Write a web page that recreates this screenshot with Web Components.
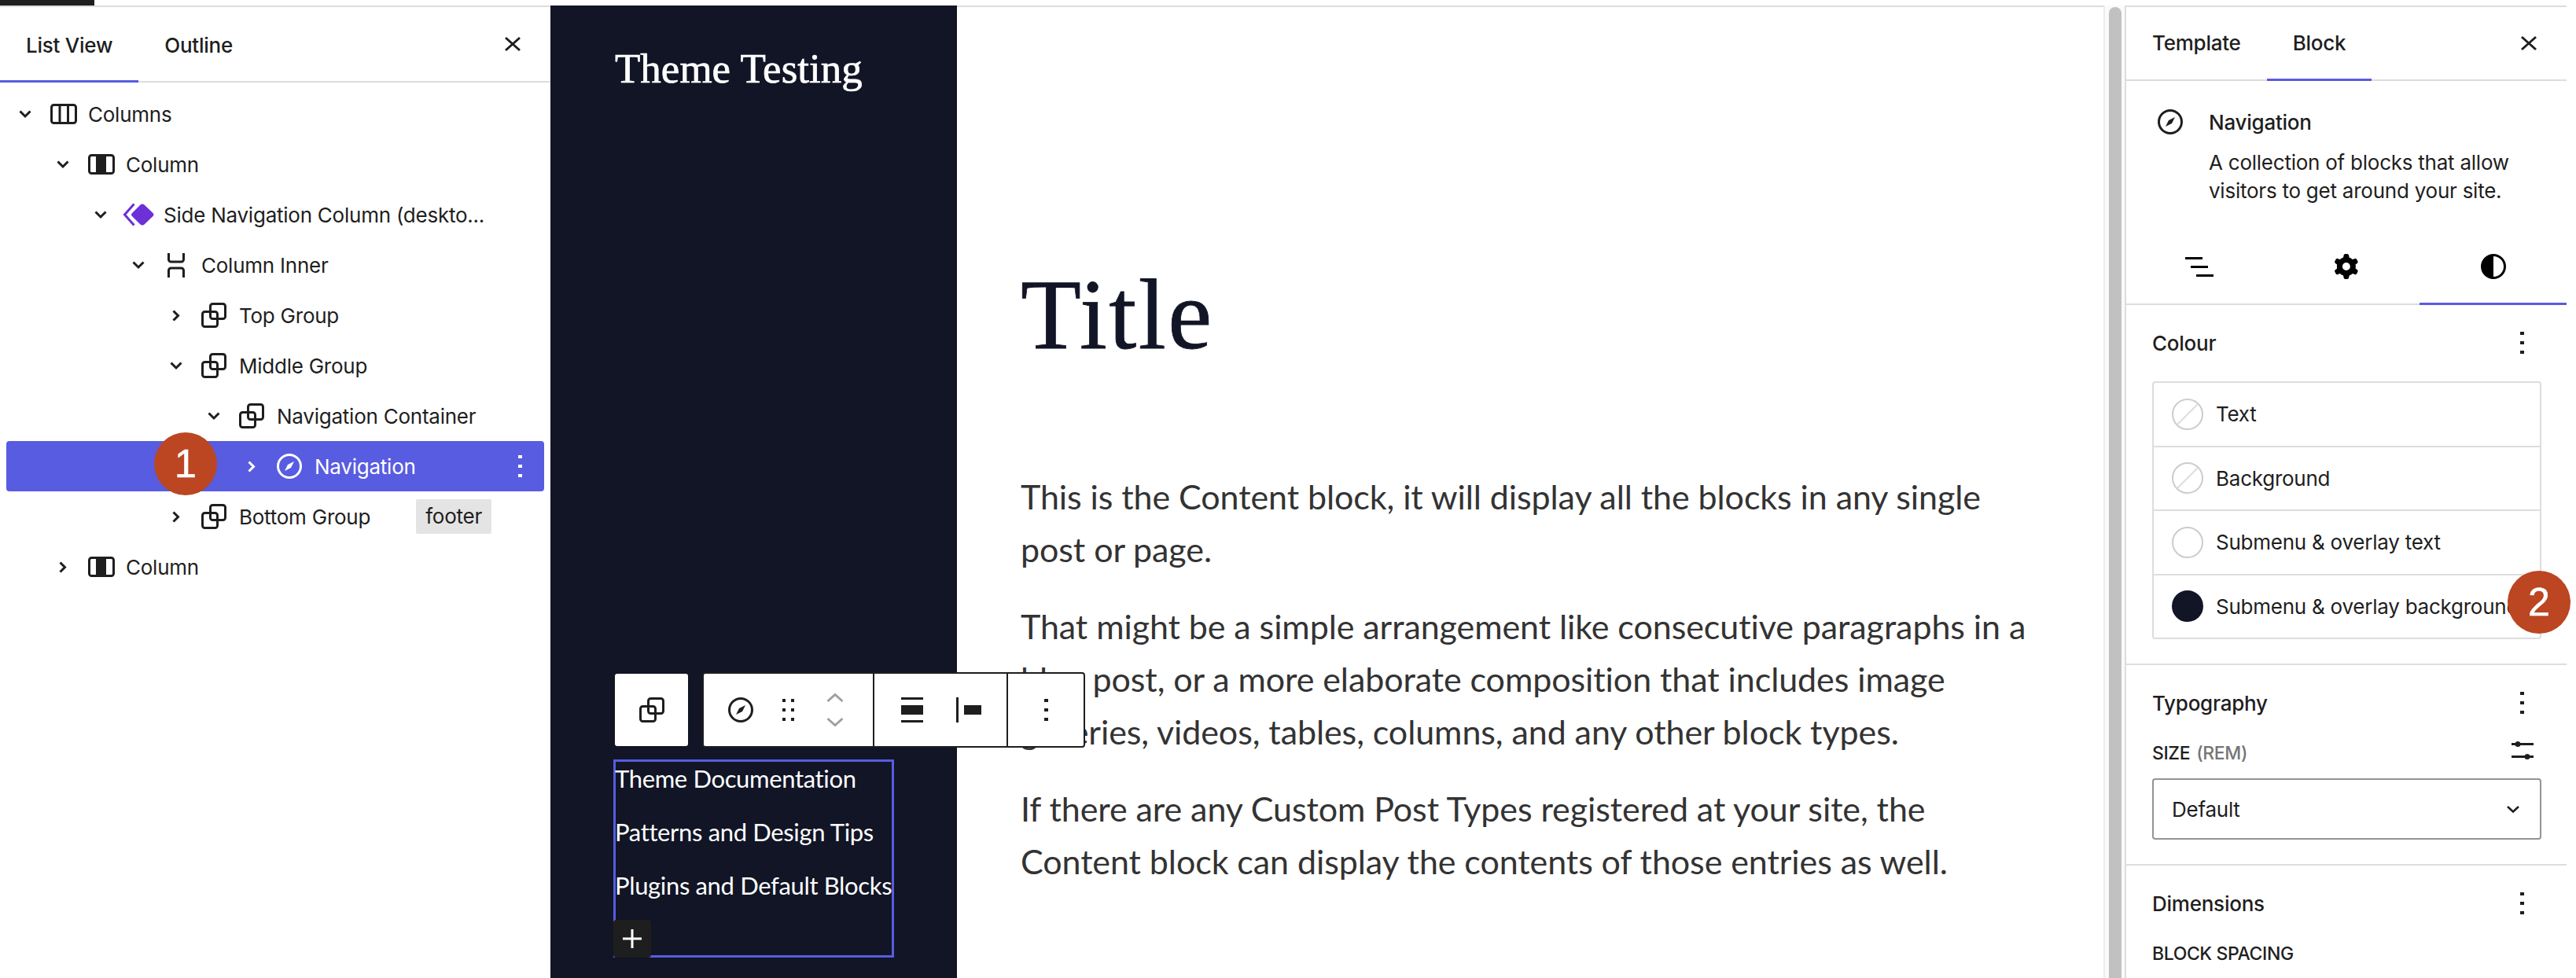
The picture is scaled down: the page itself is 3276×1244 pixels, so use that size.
<!DOCTYPE html>
<html lang="en">
<head>
<meta charset="utf-8">
<title>Site editor</title>
<style>
  html, body { margin: 0; padding: 0; height: 1244px; overflow: hidden; background: #fff; }
</style>
</head>
<body>
<editor-shell>
  <list-panel slot="left">
    <tree-row level="0" icon="columns" open>Columns</tree-row>
    <tree-row level="1" icon="column" open>Column</tree-row>
    <tree-row level="2" icon="sidenav" open>Side Navigation Column (deskto...</tree-row>
    <tree-row level="3" icon="inner" open>Column Inner</tree-row>
    <tree-row level="4" icon="group">Top Group</tree-row>
    <tree-row level="4" icon="group" open>Middle Group</tree-row>
    <tree-row level="5" icon="group" open>Navigation Container</tree-row>
    <tree-row level="6" icon="compass" selected>Navigation</tree-row>
    <tree-row level="4" icon="group" tag="footer">Bottom Group</tree-row>
    <tree-row level="1" icon="column">Column</tree-row>
  </list-panel>

  <site-column slot="dark">
    <site-title>Theme Testing</site-title>
    <nav-block>
      <nav-item>Theme Documentation</nav-item>
      <nav-item>Patterns and Design Tips</nav-item>
      <nav-item>Plugins and Default Blocks</nav-item>
    </nav-block>
  </site-column>

  <post-content slot="content">
    <post-title>Title</post-title>
    <post-para>This is the Content block, it will display all the blocks in any single<br>post or page.</post-para>
    <post-para>That might be a simple arrangement like consecutive paragraphs in a<br>blog post, or a more elaborate composition that includes image<br>galleries, videos, tables, columns, and any other block types.</post-para>
    <post-para>If there are any Custom Post Types registered at your site, the<br>Content block can display the contents of those entries as well.</post-para>
  </post-content>

  <settings-panel slot="right">
    <panel-section heading="Colour">
      <color-list>
        <color-row swatch="none">Text</color-row>
        <color-row swatch="none">Background</color-row>
        <color-row swatch="white">Submenu &amp; overlay text</color-row>
        <color-row swatch="dark">Submenu &amp; overlay background</color-row>
      </color-list>
    </panel-section>
    <panel-section heading="Typography">
      <size-control></size-control>
    </panel-section>
    <panel-section heading="Dimensions" open-end>
      <small-label>BLOCK SPACING</small-label>
    </panel-section>
  </settings-panel>

  <step-badge slot="overlay" x="196" y="550">1</step-badge>
  <step-badge slot="overlay" x="3189" y="726">2</step-badge>
</editor-shell>

<script>
const INK = "#1e1e1e";
const ACCENT = "#585ce0";
const NIGHT = "#111526";
const UI_FONT = 'Inter, "Liberation Sans", sans-serif';

// name: [width, height, svg body, left margin]
const ICONS = {
  close: [20, 18, `<path d="M1 1l18 16M19 1L1 17" stroke="currentColor" stroke-width="3"/>`],
  "chev-down": [16, 10, `<path d="M1.5 1.5L8 8l6.5-6.5" stroke="currentColor" stroke-width="3"/>`],
  "chev-right": [16, 15, `<path d="M4.5 1.5l6 6-6 6" stroke="currentColor" stroke-width="3"/>`],
  columns: [34, 26, `<rect x="1.5" y="1.5" width="31" height="23" rx="3" stroke="currentColor" stroke-width="3"/><path d="M12 2v22M22.5 2v22" stroke="currentColor" stroke-width="3"/>`],
  column: [34, 26, `<rect x="1.5" y="1.5" width="31" height="23" rx="3" stroke="currentColor" stroke-width="3"/><rect x="10" y="2" width="13" height="22" fill="currentColor"/>`],
  sidenav: [40, 30, `<path d="M25 1.5q1.5 0 2.5 1L38.5 13q2 2 0 4L27.5 27.5q-2.5 2-5 0L12 17q-2-2 0-4L22.5 2.5q1-1 2.5-1z" fill="#6d2fd6"/><path d="M14.5 1.5L2.5 15l12 13.5" stroke="#6d2fd6" stroke-width="3"/>`, -4],
  inner: [22, 31, `<path d="M1.5 0v8a3 3 0 0 0 3 3h13a3 3 0 0 0 3-3V0M1.5 31v-9a3 3 0 0 1 3-3h13a3 3 0 0 1 3 3v9" stroke="currentColor" stroke-width="3"/>`, 5],
  group: [32, 32, `<rect x="1.5" y="11.5" width="19" height="19" rx="3" stroke="currentColor" stroke-width="3"/><rect x="11.5" y="1.5" width="19" height="19" rx="3" stroke="currentColor" stroke-width="3"/>`],
  compass: [32, 32, `<circle cx="16" cy="16" r="14.5" stroke="currentColor" stroke-width="3"/><path d="M22 10l-4 8-8 4 4-8z" fill="currentColor"/>`],
  dots: [5, 28, `<rect width="5" height="4" fill="currentColor"/><rect y="12" width="5" height="4" fill="currentColor"/><rect y="24" width="5" height="4" fill="currentColor"/>`],
  dragger: [15, 28, `<path d="M0 0h4v4H0zM11 0h4v4h-4zM0 12h4v4H0zM11 12h4v4h-4zM0 24h4v4H0zM11 24h4v4h-4z" fill="currentColor"/>`],
  mover: [22, 42, `<path d="M1.5 10L11 1.5 20.5 10M1.5 32L11 40.5 20.5 32" stroke="#a0a0a0" stroke-width="3"/>`],
  "align-full": [28, 32, `<path d="M0 0h28v3H0zM0 10h28v12H0zM0 29h28v3H0z" fill="currentColor"/>`],
  "justify-left": [32, 32, `<path d="M0 0h3v32H0zM10 10h22v12H10z" fill="currentColor"/>`],
  "list-view": [36, 25, `<path d="M0 0h22v3H0zM7 11h22v3H7zM14 22h22v3H14z" fill="#000"/>`],
  cog: [30, 32, `<path fill="#000" fill-rule="evenodd" d="M10.289 4.836A1 1 0 0 1 11.275 4h1.306a1 1 0 0 1 .987.836l.244 1.466c.787.26 1.503.679 2.108 1.218l1.393-.522a1 1 0 0 1 1.216.437l.653 1.13a1 1 0 0 1-.23 1.273l-1.148.944a6.025 6.025 0 0 1 0 2.435l1.149.946a1 1 0 0 1 .23 1.272l-.653 1.13a1 1 0 0 1-1.216.437l-1.394-.522c-.605.54-1.32.958-2.108 1.218l-.244 1.466a1 1 0 0 1-.987.836h-1.306a1 1 0 0 1-.986-.836l-.244-1.466a5.995 5.995 0 0 1-2.108-1.218l-1.394.522a1 1 0 0 1-1.217-.436l-.653-1.131a1 1 0 0 1 .23-1.272l1.149-.946a6.026 6.026 0 0 1 0-2.435l-1.148-.944a1 1 0 0 1-.23-1.272l.653-1.131a1 1 0 0 1 1.217-.437l1.393.522a5.994 5.994 0 0 1 2.108-1.218l.244-1.466ZM14.429 12a2.5 2.5 0 1 1-5 0 2.5 2.5 0 0 1 5 0Z" transform="scale(2) translate(-4.5 -4)"/>`],
  half: [32, 32, `<circle cx="16" cy="16" r="14.5" stroke="#000" stroke-width="3"/><path d="M16 1a15 15 0 0 0 0 30z" fill="#000"/>`],
  sliders: [28, 23, `<path d="M0 3.5h28M0 19.5h28" stroke="currentColor" stroke-width="3"/><circle cx="8" cy="3.5" r="3.5" fill="currentColor"/><circle cx="20" cy="19.5" r="3.5" fill="currentColor"/>`],
  "select-chev": [16, 9, `<path d="M1 1l7 6.5L15 1" stroke="currentColor" stroke-width="2.5"/>`],
  plus: [24, 24, `<path d="M12 0v24M0 12h24" stroke="currentColor" stroke-width="3"/>`],
};

class WpIcon extends HTMLElement {
  connectedCallback() {
    const [w, h, body, ml] = ICONS[this.getAttribute("name")];
    const root = this.shadowRoot || this.attachShadow({ mode: "open" });
    root.innerHTML = `<style>
      :host { display: inline-flex; flex: none; margin-left: ${ml || 0}px; line-height: 0; }
      svg { display: block; overflow: visible; }
    </style><svg width="${w}" height="${h}" viewBox="0 0 ${w} ${h}" fill="none">${body}</svg>`;
  }
}
customElements.define("wp-icon", WpIcon);

class EditorShell extends HTMLElement {
  constructor() {
    super();
    this.attachShadow({ mode: "open" });
    this.shadowRoot.innerHTML = /* html */`
      <style>
        :host { display: block; position: relative; width: 3276px; height: 1244px; overflow: hidden;
          font-family: ${UI_FONT}; color: ${INK}; letter-spacing: -.24px; }
        .top { height: 7px; }
        .top i { display: block; width: 120px; height: 7px; background: ${INK}; }
        .main { display: flex; height: 1237px; }
        .canvas { flex: 1; display: flex; min-width: 0; }
        .margin { width: 12px; flex: none; }
      </style>
      <div class="top"><i></i></div>
      <div class="main">
        <slot name="left"></slot>
        <div class="canvas">
          <slot name="dark"></slot>
          <slot name="content"></slot>
        </div>
        <editor-scrollbar></editor-scrollbar>
        <slot name="right"></slot>
        <div class="margin"></div>
      </div>
      <slot name="overlay"></slot>
    `;
  }
}
customElements.define("editor-shell", EditorShell);

class EditorScrollbar extends HTMLElement {
  constructor() {
    super();
    this.attachShadow({ mode: "open" });
    this.shadowRoot.innerHTML = `
      <style>
        :host { display: block; flex: none; width: 29px; box-sizing: border-box; padding: 2px 4px 0 5px;
          background: #fafafa; border-left: 2px solid #ececec; border-right: 2px solid #ddd; }
        div { height: 100%; width: 16px; background: #c1c1c1; border-radius: 8px 8px 0 0; }
      </style><div></div>`;
  }
}
customElements.define("editor-scrollbar", EditorScrollbar);

class TabBar extends HTMLElement {
  constructor() {
    super();
    this.attachShadow({ mode: "open" });
    this.shadowRoot.innerHTML = `
      <style>
        :host { display: flex; align-items: stretch; box-sizing: border-box; height: var(--bar-h, 96px);
          border-top: 2px solid #ddd; border-bottom: 2px solid #ddd; }
        .x { margin-left: auto; padding-right: 38px; align-self: center; display: flex; }
      </style>
      <slot></slot>
      <div class="x"><wp-icon name="close"></wp-icon></div>`;
  }
}
customElements.define("tab-bar", TabBar);

class TabItem extends HTMLElement {
  constructor() {
    super();
    this.attachShadow({ mode: "open" });
    this.shadowRoot.innerHTML = `
      <style>
        :host { display: flex; align-items: center; padding: var(--tab-top, 0px) 33px 0; margin-bottom: -2px;
          box-sizing: border-box; font-size: 26px; font-weight: 500; border-bottom: 3px solid transparent; }
        :host([active]) { border-bottom-color: ${ACCENT}; }
      </style><slot></slot>`;
  }
}
customElements.define("tab-item", TabItem);

class ListPanel extends HTMLElement {
  constructor() {
    super();
    this.attachShadow({ mode: "open" });
    this.shadowRoot.innerHTML = `
      <style>
        :host { display: block; flex: none; width: 700px; height: 100%; background: #fff; --bar-h: 98px; --tab-top: 3px; }
        .tree { padding-top: 8px; }
      </style>
      <tab-bar><tab-item active>List View</tab-item><tab-item>Outline</tab-item></tab-bar>
      <div class="tree"><slot></slot></div>`;
  }
}
customElements.define("list-panel", ListPanel);

class TreeRow extends HTMLElement {
  constructor() {
    super();
    this.attachShadow({ mode: "open" });
  }
  connectedCallback() {
    const level = +this.getAttribute("level");
    const selected = this.hasAttribute("selected");
    const tag = this.getAttribute("tag");
    this.shadowRoot.innerHTML = /* html */`
      <style>
        :host { display: block; font-size: 26px; }
        .row { display: flex; align-items: center; height: 64px; margin: 0 8px; box-sizing: border-box;
          padding-left: ${16 + 48 * level}px; border-radius: 4px; white-space: nowrap; }
        :host([selected]) .row { background: ${ACCENT}; color: #fff; padding-right: 30px; }
        .chev { display: flex; width: 16px; margin-right: 24px; flex: none; }
        .ico { display: flex; width: 34px; margin-right: 14px; flex: none; }
        .more { margin-left: auto; transform: translateX(2px); display: flex; }
        .tag { margin-left: 58px; height: 44px; line-height: 44px; padding: 0 12px; background: #e4e4e4; border-radius: 2px; }
      </style>
      <div class="row">
        <span class="chev"><wp-icon name="${this.hasAttribute("open") ? "chev-down" : "chev-right"}"></wp-icon></span>
        <span class="ico"><wp-icon name="${this.getAttribute("icon")}"></wp-icon></span>
        <slot></slot>
        ${tag ? `<span class="tag">${tag}</span>` : ""}
        ${selected ? `<span class="more"><wp-icon name="dots"></wp-icon></span>` : ""}
      </div>`;
  }
}
customElements.define("tree-row", TreeRow);

class SiteColumn extends HTMLElement {
  constructor() {
    super();
    this.attachShadow({ mode: "open" });
    this.shadowRoot.innerHTML = `
      <style>
        :host { display: flex; flex-direction: column; flex: none; box-sizing: border-box; width: 517px; height: 100%;
          background: ${NIGHT}; color: #fff; padding: 48px 0 26px 80px; position: relative; z-index: 2; }
      </style><slot></slot>`;
  }
}
customElements.define("site-column", SiteColumn);

class SiteTitle extends HTMLElement {
  constructor() {
    super();
    this.attachShadow({ mode: "open" });
    this.shadowRoot.innerHTML = `
      <style>
        :host { display: block; padding-left: 2px; font: 400 53px/65px "Liberation Serif", serif; letter-spacing: 0;
          -webkit-text-stroke: .7px #fff; white-space: nowrap; }
      </style><slot></slot>`;
  }
}
customElements.define("site-title", SiteTitle);

class NavBlock extends HTMLElement {
  constructor() {
    super();
    this.attachShadow({ mode: "open" });
    this.shadowRoot.innerHTML = `
      <style>
        :host { display: flex; flex-direction: column; gap: 36px; position: relative; margin-top: auto;
          box-sizing: border-box; width: 357px; height: 252px; padding-top: 5px; border: 3px solid ${ACCENT}; }
        .add { position: absolute; left: -3px; bottom: -3px; width: 48px; height: 48px; background: ${INK};
          border-radius: 4px; display: flex; align-items: center; justify-content: center; color: #fff; }
      </style>
      <block-toolbar></block-toolbar>
      <slot></slot>
      <div class="add"><wp-icon name="plus"></wp-icon></div>`;
  }
}
customElements.define("nav-block", NavBlock);

class NavItem extends HTMLElement {
  constructor() {
    super();
    this.attachShadow({ mode: "open" });
    this.shadowRoot.innerHTML = `
      <style>
        :host { display: block; font: 400 31px/32px Lato, sans-serif; color: #fff; white-space: nowrap; letter-spacing: -.35px; margin-left: -1px; }
      </style><slot></slot>`;
  }
}
customElements.define("nav-item", NavItem);

class BlockToolbar extends HTMLElement {
  constructor() {
    super();
    this.attachShadow({ mode: "open" });
    this.shadowRoot.innerHTML = /* html */`
      <style>
        :host { position: absolute; left: -1px; top: -114px; display: flex; align-items: center; gap: 18px; color: ${INK}; z-index: 3; }
        .parent { width: 93px; height: 92px; background: #fff; border-radius: 3px; display: flex; align-items: center; justify-content: center; }
        .bar { display: flex; height: 96px; box-sizing: border-box; background: #fff; border: 2px solid ${INK}; border-radius: 4px; }
        .seg { display: flex; align-items: center; box-sizing: border-box; }
        .seg + .seg { border-left: 2px solid ${INK}; }
        .s1 { width: 215px; padding-left: 31px; }
        .s1 wp-icon:nth-child(2) { margin-left: 37px; }
        .s1 wp-icon:nth-child(3) { margin-left: 41px; }
        .s2 { width: 170px; padding-left: 34px; }
        .s2 wp-icon:nth-child(2) { margin-left: 42px; }
        .s3 { width: 98px; justify-content: center; }
      </style>
      <div class="parent"><wp-icon name="group"></wp-icon></div>
      <div class="bar">
        <div class="seg s1"><wp-icon name="compass"></wp-icon><wp-icon name="dragger"></wp-icon><wp-icon name="mover"></wp-icon></div>
        <div class="seg s2"><wp-icon name="align-full"></wp-icon><wp-icon name="justify-left"></wp-icon></div>
        <div class="seg s3"><wp-icon name="dots"></wp-icon></div>
      </div>`;
  }
}
customElements.define("block-toolbar", BlockToolbar);

class PostContent extends HTMLElement {
  constructor() {
    super();
    this.attachShadow({ mode: "open" });
    this.shadowRoot.innerHTML = `
      <style>
        :host { display: block; flex: 1; box-sizing: border-box; height: 100%; min-width: 0; border-top: 2px solid #ddd;
          padding: 316px 0 0 81px; background: #fff; }
      </style><slot></slot>`;
  }
}
customElements.define("post-content", PostContent);

class PostTitle extends HTMLElement {
  constructor() {
    super();
    this.attachShadow({ mode: "open" });
    this.shadowRoot.innerHTML = `
      <style>
        :host { display: block; font: 400 126px/151px "Liberation Serif", serif; letter-spacing: 2.4px; color: ${NIGHT};
          -webkit-text-stroke: .8px ${NIGHT}; margin-bottom: 122px; }
      </style><slot></slot>`;
  }
}
customElements.define("post-title", PostTitle);

class PostPara extends HTMLElement {
  constructor() {
    super();
    this.attachShadow({ mode: "open" });
    this.shadowRoot.innerHTML = `
      <style>
        :host { display: block; font: 400 43px/67px Lato, sans-serif; color: #333; margin-bottom: 31px; white-space: nowrap; letter-spacing: -.08px; }
      </style><slot></slot>`;
  }
}
customElements.define("post-para", PostPara);

class SettingsPanel extends HTMLElement {
  constructor() {
    super();
    this.attachShadow({ mode: "open" });
    this.shadowRoot.innerHTML = /* html */`
      <style>
        :host { display: block; flex: none; width: 560px; height: 100%; overflow: hidden; background: #fff; --bar-h: 96px; }
        .card { display: grid; grid-template-columns: 32px 1fr; column-gap: 33px; padding: 35px 32px 31px 40px; }
        .card wp-icon { margin-top: 1px; }
        h2 { margin: 0; font: 500 26px/36px ${UI_FONT}; }
        p { margin: 15px 0 0; font: 400 26px/36px ${UI_FONT}; white-space: nowrap; }
        .modes { display: grid; grid-template-columns: repeat(3, 1fr); height: 96px; box-sizing: border-box; border-bottom: 2px solid #ddd; }
        .mode { display: flex; align-items: center; justify-content: center; margin-bottom: -2px; border-bottom: 3px solid transparent; padding-top: 1px; }
        .mode.on { border-bottom-color: ${ACCENT}; }
      </style>
      <tab-bar><tab-item>Template</tab-item><tab-item active>Block</tab-item></tab-bar>
      <div class="card">
        <wp-icon name="compass"></wp-icon>
        <div><h2>Navigation</h2><p>A collection of blocks that allow<br>visitors to get around your site.</p></div>
      </div>
      <div class="modes">
        <div class="mode"><wp-icon name="list-view"></wp-icon></div>
        <div class="mode"><wp-icon name="cog"></wp-icon></div>
        <div class="mode on"><wp-icon name="half"></wp-icon></div>
      </div>
      <slot></slot>`;
  }
}
customElements.define("settings-panel", SettingsPanel);

class PanelSection extends HTMLElement {
  constructor() {
    super();
    this.attachShadow({ mode: "open" });
  }
  connectedCallback() {
    this.shadowRoot.innerHTML = /* html */`
      <style>
        :host { display: block; padding: 31px 32px 31px 33px; border-bottom: 2px solid #ddd; }
        :host([open-end]) { border-bottom: 0; }
        .head { display: flex; align-items: center; justify-content: space-between; height: 34px; margin-bottom: 32px;
          font-size: 26px; font-weight: 500; padding-right: 22px; }
      </style>
      <div class="head"><span>${this.getAttribute("heading")}</span><wp-icon name="dots"></wp-icon></div>
      <slot></slot>`;
  }
}
customElements.define("panel-section", PanelSection);

class ColorList extends HTMLElement {
  constructor() {
    super();
    this.attachShadow({ mode: "open" });
    this.shadowRoot.innerHTML = `
      <style>
        :host { display: block; border: 2px solid #ddd; border-radius: 4px; }
      </style><slot></slot>`;
  }
}
customElements.define("color-list", ColorList);

class ColorRow extends HTMLElement {
  constructor() {
    super();
    this.attachShadow({ mode: "open" });
  }
  connectedCallback() {
    const kind = this.getAttribute("swatch");
    const fill = kind === "dark" ? NIGHT : "#fff";
    const ring = kind === "dark" ? NIGHT : "#ccc";
    const slash = kind === "none" ? `<path d="M7 33L33 7" stroke="#ddd" stroke-width="2"/>` : "";
    this.shadowRoot.innerHTML = `
      <style>
        :host { display: flex; align-items: center; gap: 16px; height: 79.5px; padding-left: 23px; font-size: 26px; white-space: nowrap; }
        :host(:not(:first-child)) { border-top: 2px solid #ddd; }
        svg { flex: none; display: block; }
      </style>
      <svg width="40" height="40" viewBox="0 0 40 40"><circle cx="20" cy="20" r="19" fill="${fill}" stroke="${ring}" stroke-width="2"/>${slash}</svg>
      <slot></slot>`;
  }
}
customElements.define("color-row", ColorRow);

class SmallLabel extends HTMLElement {
  constructor() {
    super();
    this.attachShadow({ mode: "open" });
    this.shadowRoot.innerHTML = `
      <style>
        :host { display: block; font-size: 23px; font-weight: 500; letter-spacing: -.4px; line-height: 30px; margin-top: 1px; white-space: nowrap; }
      </style><slot></slot>`;
  }
}
customElements.define("small-label", SmallLabel);

class SizeControl extends HTMLElement {
  constructor() {
    super();
    this.attachShadow({ mode: "open" });
    this.shadowRoot.innerHTML = /* html */`
      <style>
        :host { display: block; }
        .label { display: flex; align-items: center; height: 30px; margin-bottom: 17px; font-size: 23px; font-weight: 500; letter-spacing: -.4px; padding-right: 10px; }
        .label span { color: #757575; margin-left: 8px; }
        .label wp-icon { margin-left: auto; transform: translateY(-4px); }
        .select { display: flex; align-items: center; justify-content: space-between; box-sizing: border-box; height: 78px;
          padding: 0 26px 0 23px; border: 2px solid #949494; border-radius: 4px; font-size: 26px; }
      </style>
      <div class="label">SIZE<span>(REM)</span><wp-icon name="sliders"></wp-icon></div>
      <div class="select">Default<wp-icon name="select-chev"></wp-icon></div>`;
  }
}
customElements.define("size-control", SizeControl);

class StepBadge extends HTMLElement {
  constructor() {
    super();
    this.attachShadow({ mode: "open" });
  }
  connectedCallback() {
    this.shadowRoot.innerHTML = `
      <style>
        :host { position: absolute; left: ${this.getAttribute("x")}px; top: ${this.getAttribute("y")}px; z-index: 5;
          width: 80px; height: 80px; border-radius: 50%; background: #bb4621; color: #fff; letter-spacing: 0;
          display: flex; align-items: center; justify-content: center; font: 400 50px/1 "Liberation Sans", sans-serif;
          -webkit-text-stroke: .6px #fff; }
      </style><slot></slot>`;
  }
}
customElements.define("step-badge", StepBadge);
</script>
</body>
</html>
